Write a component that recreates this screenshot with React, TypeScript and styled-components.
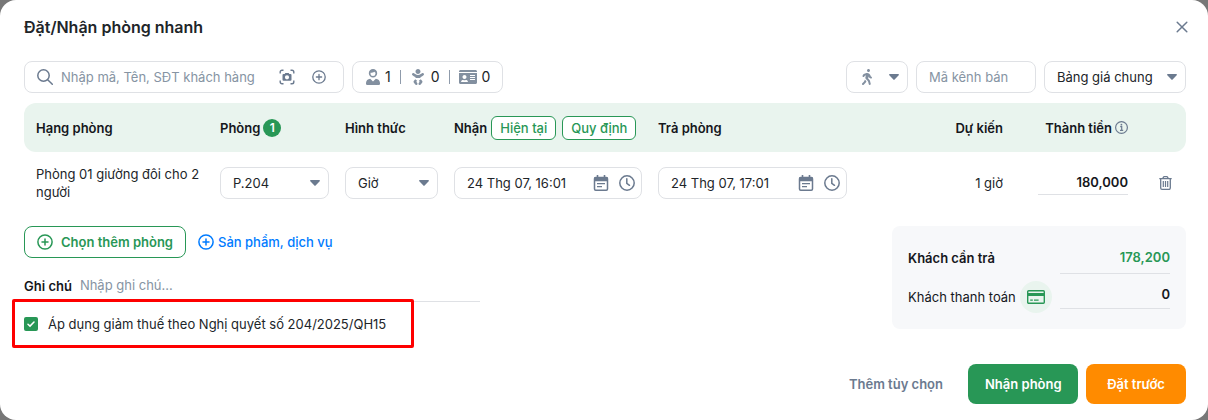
import React from 'react';
import styled, { createGlobalStyle, css } from 'styled-components';
import { FaBaby, FaIdCard, FaWalking } from 'react-icons/fa';

const color = {
  text: '#212529',
  strong: '#15171c',
  muted: '#8694a3',
  icon: '#6b7a8f',
  line: '#dfe1e5',
  green: '#289756',
  mint: '#e9f4ee',
  blue: '#007bff',
  orange: '#ff8b00',
};

const GlobalStyle = createGlobalStyle`
  *, *::before, *::after { box-sizing: border-box; }
  body { margin: 0; background: #777; }
  body, button, input, select {
    font-family: Inter, "Liberation Sans", sans-serif;
    font-size: 13px;
    line-height: 18px;
    color: ${color.text};
  }
  button, input, select { margin: 0; }
`;

const Modal = styled.main`
  background: #fff;
  border-radius: 16px;
  padding: 0 22px 16px 24px;
`;

const Header = styled.header`
  display: flex;
  align-items: center;
  justify-content: space-between;
  height: 54px;
`;

const Title = styled.h1`
  margin: 0;
  font-size: 16px;
  line-height: 24px;
  font-weight: 600;
`;

const IconButton = styled.button<{ $size?: number }>`
  display: inline-flex;
  flex: none;
  align-items: center;
  justify-content: center;
  width: ${(p) => p.$size ?? 20}px;
  height: ${(p) => p.$size ?? 20}px;
  padding: 0;
  border: 0;
  border-radius: 50%;
  background: none;
  color: ${color.icon};
  cursor: pointer;
`;

const CloseButton = styled(IconButton)`
  margin-right: -8px;
`;

const Toolbar = styled.div`
  display: flex;
  gap: 8px;
  margin-top: 7px;
`;

const boxed = css`
  height: 32px;
  border: 1px solid ${color.line};
  border-radius: 8px;
  background: #fff;
`;

const SearchBox = styled.div`
  ${boxed}
  display: flex;
  align-items: center;
  width: 320px;
  padding: 0 14px 0 12px;
  color: ${color.icon};
`;

const BareInput = styled.input`
  flex: 1;
  min-width: 0;
  height: 100%;
  padding: 0;
  border: 0;
  outline: 0;
  background: none;
  &::placeholder { color: ${color.muted}; opacity: 1; }
`;

const SearchInput = styled(BareInput)`
  margin-left: 8px;
`;

const SearchTools = styled.div`
  display: flex;
  gap: 12px;
`;

const GuestBox = styled.div`
  ${boxed}
  display: flex;
  align-items: center;
  gap: 9px;
  padding: 0 12px 0 13px;
`;

const GuestCount = styled.span`
  display: flex;
  align-items: center;
  gap: 5px;
  font-size: 14px;
  svg { color: #8390a0; }
`;

const GuestDivider = styled.span`
  width: 1px;
  height: 14px;
  background: #8f9bab;
`;

const Spacer = styled.div`
  flex: 1;
`;

const SelectFrame = styled.div<{ $width?: number }>`
  position: relative;
  width: ${(p) => (p.$width ? `${p.$width}px` : '100%')};
`;

const NativeSelect = styled.select`
  ${boxed}
  display: block;
  width: 100%;
  padding: 0 24px 0 12px;
  appearance: none;
`;

const SelectMark = styled.span<{ $side: 'left' | 'right' }>`
  position: absolute;
  top: 0;
  ${(p) => (p.$side === 'left' ? 'left: 13px;' : 'right: 9px;')}
  display: flex;
  align-items: center;
  height: 32px;
  color: ${(p) => (p.$side === 'left' ? '#8390a0' : color.icon)};
  pointer-events: none;
`;

const ChannelInput = styled.input`
  ${boxed}
  width: 120px;
  padding: 0 12px;
  &::placeholder { color: ${color.muted}; opacity: 1; }
`;

const RoomTable = styled.table`
  width: 100%;
  margin-top: 10px;
  table-layout: fixed;
  border-collapse: separate;
  border-spacing: 0;
`;

const Col = styled.col<{ $width?: number }>`
  width: ${(p) => (p.$width ? `${p.$width}px` : 'auto')};
`;

const HeadCell = styled.th<{ $right?: boolean }>`
  height: 49px;
  padding: 0 16px 0 0;
  background: ${color.mint};
  color: ${color.strong};
  font-weight: 600;
  text-align: ${(p) => (p.$right ? 'right' : 'left')};
  white-space: nowrap;
  &:first-child { padding-left: 12px; border-radius: 12px 0 0 12px; }
  &:last-child { border-radius: 0 12px 12px 0; }
`;

const HeadContent = styled.span<{ $gap: number; $right?: boolean }>`
  display: flex;
  align-items: center;
  justify-content: ${(p) => (p.$right ? 'flex-end' : 'flex-start')};
  gap: ${(p) => p.$gap}px;
`;

const Badge = styled.span`
  display: flex;
  align-items: center;
  justify-content: center;
  width: 18px;
  height: 18px;
  border-radius: 50%;
  background: ${color.green};
  color: #fff;
  font-size: 12px;
`;

const TimeButtons = styled.span`
  display: flex;
  gap: 6px;
`;

const TimeButton = styled.button`
  height: 24px;
  padding: 0 8px;
  border: 1px solid ${color.green};
  border-radius: 6px;
  background: #fff;
  color: ${color.green};
  font-weight: 500;
  cursor: pointer;
`;

const Cell = styled.td<{ $right?: boolean }>`
  height: 62px;
  padding: 0 16px 0 0;
  vertical-align: middle;
  text-align: ${(p) => (p.$right ? 'right' : 'left')};
  &:first-child { padding-left: 12px; }
  &:last-child { padding: 0; text-align: center; }
`;

const DateBox = styled.div`
  ${boxed}
  display: flex;
  align-items: center;
  gap: 6px;
  padding: 0 4px 0 12px;
`;

const AmountInput = styled.input<{ $width: number; $height: number; $tone?: string }>`
  width: ${(p) => p.$width}px;
  height: ${(p) => p.$height}px;
  padding: 0 0 2px;
  border: 0;
  border-bottom: 1px solid ${color.line};
  outline: 0;
  background: none;
  color: ${(p) => p.$tone ?? color.strong};
  font-weight: 600;
  text-align: right;
`;

const Body = styled.div`
  display: flex;
  align-items: flex-start;
  justify-content: space-between;
  gap: 24px;
  margin-top: 12px;
`;

const Left = styled.div`
  flex: 1;
  max-width: 456px;
`;

const Actions = styled.div`
  display: flex;
  gap: 12px;
`;

const AddRoomButton = styled.button`
  display: flex;
  align-items: center;
  gap: 8px;
  height: 32px;
  padding: 0 12px;
  border: 1px solid ${color.green};
  border-radius: 8px;
  background: #fff;
  color: ${color.green};
  font-weight: 600;
  cursor: pointer;
`;

const ServiceLink = styled.a`
  display: flex;
  align-items: center;
  gap: 4px;
  color: ${color.blue};
  font-weight: 500;
  text-decoration: none;
`;

const NoteRow = styled.div`
  display: flex;
  align-items: center;
  gap: 8px;
  margin-top: 12px;
`;

const NoteLabel = styled.label`
  color: ${color.strong};
  font-weight: 600;
`;

const NoteInput = styled(BareInput)`
  height: 32px;
  padding-bottom: 2px;
  border-bottom: 1px solid ${color.line};
`;

const TaxOption = styled.label`
  position: relative;
  display: flex;
  align-items: center;
  gap: 10px;
  width: 402px;
  height: 49px;
  margin: -3px 0 0 -12px;
  padding: 0 9px;
  border: 3px solid #fe0000;
  border-radius: 2px;
`;

const Checkbox = styled.input`
  appearance: none;
  width: 14px;
  height: 14px;
  margin: 0;
  border-radius: 2px;
  background: ${color.green};
`;

const CheckMark = styled.svg`
  position: absolute;
  left: 12px;
  pointer-events: none;
`;

const Summary = styled.section`
  display: flex;
  flex-direction: column;
  gap: 7px;
  width: 294px;
  padding: 16px;
  border-radius: 8px;
  background: #f7f8fa;
`;

const SummaryRow = styled.div`
  display: flex;
  align-items: flex-start;
  justify-content: space-between;
  height: 32px;
`;

const SummaryLabel = styled.label<{ $strong?: boolean }>`
  color: ${color.strong};
  font-weight: ${(p) => (p.$strong ? 600 : 400)};
  line-height: 32px;
`;

const PayLabel = styled.div`
  display: flex;
  gap: 4px;
`;

const CardButton = styled(IconButton)`
  background: ${color.mint};
  color: ${color.green};
`;

const Footer = styled.footer`
  display: flex;
  align-items: center;
  justify-content: flex-end;
  gap: 8px;
  margin-top: 16px;
`;

const FooterButton = styled.button<{ $fill?: string; $width?: number }>`
  width: ${(p) => (p.$width ? `${p.$width}px` : 'auto')};
  height: 40px;
  padding: 0 17px;
  border: 0;
  border-radius: 8px;
  background: ${(p) => p.$fill ?? 'none'};
  color: ${(p) => (p.$fill ? '#fff' : color.icon)};
  font-weight: 600;
  white-space: nowrap;
  cursor: pointer;
`;

const CloseIcon = () => (
  <svg width="12" height="12" viewBox="0 0 12 12" fill="none" stroke="currentColor" strokeWidth="1.5" strokeLinecap="round">
    <path d="M1.2 1.2l9.6 9.6M10.8 1.2l-9.6 9.6" />
  </svg>
);

const SearchIcon = () => (
  <svg width="16" height="16" viewBox="0 0 16 16" fill="none" stroke="currentColor" strokeWidth="1.5" strokeLinecap="round">
    <circle cx="6.5" cy="6.5" r="5.7" />
    <path d="M10.7 10.7l4.6 4.6" />
  </svg>
);

const ScanIcon = () => (
  <svg width="16" height="16" viewBox="0 0 16 16" fill="none" stroke="currentColor" strokeWidth="1.4">
    <path d="M1.2 4.5V3a1.8 1.8 0 0 1 1.8-1.8h1.5M11.5 1.2H13A1.8 1.8 0 0 1 14.8 3v1.5M14.8 11.5V13a1.8 1.8 0 0 1-1.8 1.8h-1.5M4.5 14.8H3A1.8 1.8 0 0 1 1.2 13v-1.5" />
    <path
      fill="currentColor"
      stroke="none"
      fillRule="evenodd"
      d="M6.3 4h3.4l.6 1h1.2a1 1 0 0 1 1 1v4.7a1 1 0 0 1-1 1h-7a1 1 0 0 1-1-1V6a1 1 0 0 1 1-1h1.2zM8 6.2a2.1 2.1 0 1 0 0 4.2 2.1 2.1 0 0 0 0-4.2z"
    />
  </svg>
);

const PlusCircleIcon = ({ size, weight = 1.5 }: { size: number; weight?: number }) => (
  <svg width={size} height={size} viewBox="0 0 16 16" fill="none" stroke="currentColor" strokeWidth={weight} strokeLinecap="round">
    <circle cx="8" cy="8" r="7.1" />
    <path d="M8 5v6M5 8h6" />
  </svg>
);

const AdultIcon = () => (
  <svg width="14" height="16" viewBox="0 0 14 16" fill="currentColor">
    <path
      fillRule="evenodd"
      d="M7 0a4.200 4.200 0 0 1 4.200 4.300 4.200 4.200 0 1 1-8.400 0A4.200 4.200 0 0 1 7 0zm1.300 2.800C7.500 3.500 6 3.800 4.500 3.800v.6a2.500 2.500 0 0 0 5 0v-.6c-.5-.2-.9-.5-1.200-1z"
    />
    <path d="M4.200 9.700L7 12.400l2.800-2.700c2.500.2 4.200 1.900 4.200 4.300v.8a1.200 1.200 0 0 1-1.200 1.200H1.200A1.200 1.200 0 0 1 0 14.800V14c0-2.400 1.700-4.100 4.200-4.300z" />
  </svg>
);

const CaretIcon = () => (
  <svg width="10" height="6" viewBox="0 0 10 6" fill="currentColor">
    <path d="M.8 0h8.400c.7 0 1 .8.5 1.300L5.600 5.600a.8.8 0 0 1-1.200 0L.3 1.300C-.2.8.1 0 .8 0z" />
  </svg>
);

const CalendarIcon = () => (
  <svg width="16" height="16" viewBox="0 0 16 16" fill="none" stroke="currentColor" strokeWidth="1.500">
    <rect x="1.500" y="2.500" width="13" height="12.700" rx="1.200" />
    <path fill="currentColor" stroke="none" d="M1 2.500h14v3.700H1zM3.700 0h1.600v3H3.700zM10.700 0h1.600v3h-1.600z" />
    <path d="M4 8.700h8M4 11.700h5" strokeWidth="1.200" />
  </svg>
);

const ClockIcon = () => (
  <svg width="16" height="16" viewBox="0 0 16 16" fill="none" stroke="currentColor" strokeWidth="1.500" strokeLinecap="round">
    <circle cx="8" cy="8" r="7.200" />
    <path d="M7.800 3.800v4.500l2.700 2" />
  </svg>
);

const InfoIcon = () => (
  <svg width="13" height="13" viewBox="0 0 13 13" fill="none" stroke={color.icon} strokeWidth="1.200">
    <circle cx="6.500" cy="6.500" r="5.900" />
    <path d="M5.200 5.700h1.500v3.500M5 9.400h3.200" />
    <circle cx="6.400" cy="3.700" r=".9" fill={color.icon} stroke="none" />
  </svg>
);

const TrashIcon = () => (
  <svg width="13" height="14" viewBox="0 0 13 14" fill="none" stroke="currentColor" strokeWidth="1.300">
    <path d="M.3 2.700h12.400M3.700 2.600l.8-1.500a.8.8 0 0 1 .7-.4h2.600a.8.8 0 0 1 .7.400l.8 1.500M1.700 2.700v9.300c0 .8.6 1.300 1.300 1.300h7c.7 0 1.300-.5 1.300-1.300V2.700" />
    <path d="M4.300 5v6M6.500 5v6M8.700 5v6" strokeWidth="1.200" />
  </svg>
);

const CardIcon = () => (
  <svg width="18" height="14" viewBox="0 0 18 14" fill="none" stroke="currentColor" strokeWidth="1.400">
    <rect x=".7" y=".7" width="16.600" height="12.600" rx="1" />
    <path d="M1 4.500h16" strokeWidth="3" />
    <path d="M3.200 10.200h2.600M7 10.200h4.600" strokeWidth="1.300" />
  </svg>
);

type SelectProps = { label: string; value: string; width?: number };

const Select = ({ label, value, width }: SelectProps) => (
  <SelectFrame $width={width}>
    <NativeSelect aria-label={label} defaultValue={value}>
      <option>{value}</option>
    </NativeSelect>
    <SelectMark $side="right"><CaretIcon /></SelectMark>
  </SelectFrame>
);

const DateField = ({ label, value }: { label: string; value: string }) => (
  <DateBox>
    <BareInput aria-label={label} defaultValue={value} />
    <IconButton type="button" aria-label="Chọn ngày"><CalendarIcon /></IconButton>
    <IconButton type="button" aria-label="Chọn giờ"><ClockIcon /></IconButton>
  </DateBox>
);

export default function App() {
  return (
    <>
      <GlobalStyle />
      <Modal>
        <Header>
          <Title>Đặt/Nhận phòng nhanh</Title>
          <CloseButton type="button" $size={24} aria-label="Đóng"><CloseIcon /></CloseButton>
        </Header>

        <Toolbar>
          <SearchBox>
            <SearchIcon />
            <SearchInput aria-label="Khách hàng" placeholder="Nhập mã, Tên, SĐT khách hàng" />
            <SearchTools>
              <IconButton type="button" aria-label="Quét giấy tờ"><ScanIcon /></IconButton>
              <IconButton type="button" aria-label="Thêm khách hàng"><PlusCircleIcon size={14} /></IconButton>
            </SearchTools>
          </SearchBox>
          <GuestBox>
            <GuestCount><AdultIcon />1</GuestCount>
            <GuestDivider />
            <GuestCount><FaBaby size={16} />0</GuestCount>
            <GuestDivider />
            <GuestCount><FaIdCard size={18} />0</GuestCount>
          </GuestBox>
          <Spacer />
          <SelectFrame $width={62}>
            <NativeSelect aria-label="Nguồn khách" defaultValue="walk-in">
              <option value="walk-in" aria-label="Khách lẻ" />
            </NativeSelect>
            <SelectMark $side="left"><FaWalking size={16} /></SelectMark>
            <SelectMark $side="right"><CaretIcon /></SelectMark>
          </SelectFrame>
          <ChannelInput aria-label="Mã kênh bán" placeholder="Mã kênh bán" />
          <Select label="Bảng giá" value="Bảng giá chung" width={142} />
        </Toolbar>

        <RoomTable>
          <colgroup>
            <Col $width={196} />
            <Col $width={125} />
            <Col $width={109} />
            <Col $width={204} />
            <Col $width={205} />
            <Col />
            <Col $width={125} />
            <Col $width={42} />
          </colgroup>
          <thead>
            <tr>
              <HeadCell>Hạng phòng</HeadCell>
              <HeadCell><HeadContent $gap={3}>Phòng<Badge>1</Badge></HeadContent></HeadCell>
              <HeadCell>Hình thức</HeadCell>
              <HeadCell>
                <HeadContent $gap={4}>
                  Nhận
                  <TimeButtons>
                    <TimeButton type="button">Hiện tại</TimeButton>
                    <TimeButton type="button">Quy định</TimeButton>
                  </TimeButtons>
                </HeadContent>
              </HeadCell>
              <HeadCell>Trả phòng</HeadCell>
              <HeadCell $right>Dự kiến</HeadCell>
              <HeadCell $right><HeadContent $gap={3} $right>Thành tiền<InfoIcon /></HeadContent></HeadCell>
              <HeadCell />
            </tr>
          </thead>
          <tbody>
            <tr>
              <Cell>Phòng 01 giường đôi cho 2 người</Cell>
              <Cell><Select label="Phòng" value="P.204" /></Cell>
              <Cell><Select label="Hình thức" value="Giờ" /></Cell>
              <Cell><DateField label="Nhận" value="24 Thg 07, 16:01" /></Cell>
              <Cell><DateField label="Trả phòng" value="24 Thg 07, 17:01" /></Cell>
              <Cell $right>1 giờ</Cell>
              <Cell $right><AmountInput $width={90} $height={24} aria-label="Thành tiền" defaultValue="180,000" /></Cell>
              <Cell><IconButton type="button" aria-label="Xóa phòng"><TrashIcon /></IconButton></Cell>
            </tr>
          </tbody>
        </RoomTable>

        <Body>
          <Left>
            <Actions>
              <AddRoomButton type="button"><PlusCircleIcon size={16} />Chọn thêm phòng</AddRoomButton>
              <ServiceLink href="#services"><PlusCircleIcon size={16} />Sản phẩm, dịch vụ</ServiceLink>
            </Actions>
            <NoteRow>
              <NoteLabel htmlFor="note">Ghi chú</NoteLabel>
              <NoteInput id="note" placeholder="Nhập ghi chú..." />
            </NoteRow>
            <TaxOption>
              <Checkbox type="checkbox" defaultChecked />
              <CheckMark width="8" height="8" viewBox="0 0 8 8" fill="none" stroke="#fff" strokeWidth="1.500" strokeLinecap="round">
                <path d="M1 4.200l2 1.900 4-4.100" />
              </CheckMark>
              Áp dụng giảm thuế theo Nghị quyết số 204/2025/QH15
            </TaxOption>
          </Left>
          <Summary>
            <SummaryRow>
              <SummaryLabel $strong htmlFor="due">Khách cần trả</SummaryLabel>
              <AmountInput id="due" $width={110} $height={32} $tone={color.green} readOnly value="178,200" />
            </SummaryRow>
            <SummaryRow>
              <PayLabel>
                <SummaryLabel htmlFor="paid">Khách thanh toán</SummaryLabel>
                <CardButton type="button" $size={32} aria-label="Phương thức thanh toán"><CardIcon /></CardButton>
              </PayLabel>
              <AmountInput id="paid" $width={110} $height={28} defaultValue="0" />
            </SummaryRow>
          </Summary>
        </Body>

        <Footer>
          <FooterButton type="button">Thêm tùy chọn</FooterButton>
          <FooterButton type="button" $fill={color.green} $width={110}>Nhận phòng</FooterButton>
          <FooterButton type="button" $fill={color.orange} $width={100}>Đặt trước</FooterButton>
        </Footer>
      </Modal>
    </>
  );
}
